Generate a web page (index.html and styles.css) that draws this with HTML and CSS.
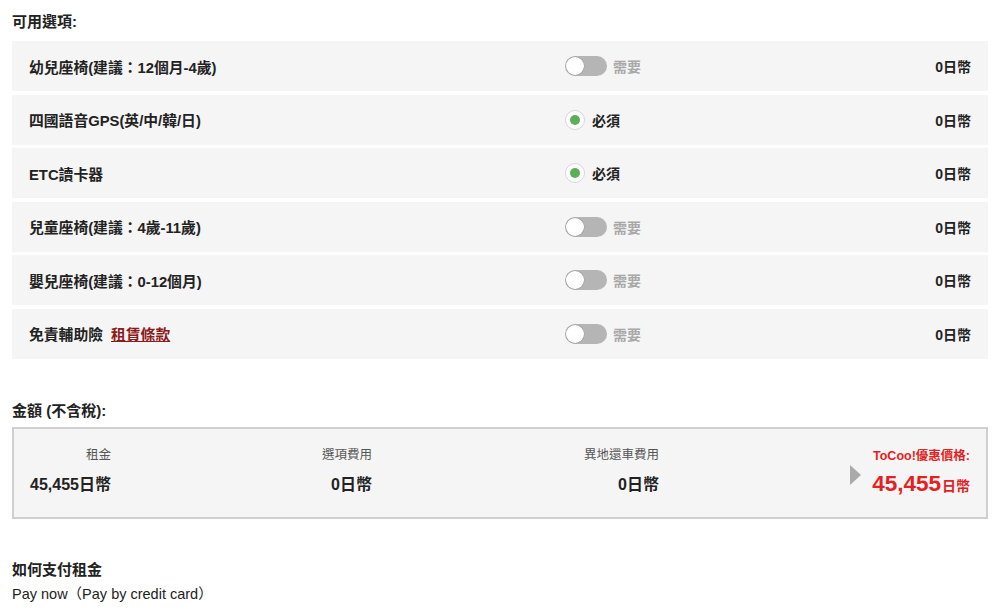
FILE: index.html
```html
<!DOCTYPE html>
<html lang="zh-Hant">
<head>
<meta charset="utf-8">
<title>可用選項</title>
<link rel="stylesheet" href="styles.css">
</head>
<body>
<div class="page">
  <h2 class="section-title">可用選項:</h2>
  <div class="options">
    <div class="opt-row">
      <div class="opt-name">幼兒座椅(建議：12個月-4歲)</div>
      <div class="opt-ctrl"><span class="toggle"><span class="knob"></span></span><span class="ctrl-label off">需要</span></div>
      <div class="opt-price">0日幣</div>
    </div>
    <div class="opt-row">
      <div class="opt-name">四國語音GPS(英/中/韓/日)</div>
      <div class="opt-ctrl"><span class="radio"><span class="dot"></span></span><span class="ctrl-label on">必須</span></div>
      <div class="opt-price">0日幣</div>
    </div>
    <div class="opt-row">
      <div class="opt-name">ETC讀卡器</div>
      <div class="opt-ctrl"><span class="radio"><span class="dot"></span></span><span class="ctrl-label on">必須</span></div>
      <div class="opt-price">0日幣</div>
    </div>
    <div class="opt-row">
      <div class="opt-name">兒童座椅(建議：4歲-11歲)</div>
      <div class="opt-ctrl"><span class="toggle"><span class="knob"></span></span><span class="ctrl-label off">需要</span></div>
      <div class="opt-price">0日幣</div>
    </div>
    <div class="opt-row">
      <div class="opt-name">嬰兒座椅(建議：0-12個月)</div>
      <div class="opt-ctrl"><span class="toggle"><span class="knob"></span></span><span class="ctrl-label off">需要</span></div>
      <div class="opt-price">0日幣</div>
    </div>
    <div class="opt-row">
      <div class="opt-name">免責輔助險<a class="terms" href="#">租賃條款</a></div>
      <div class="opt-ctrl"><span class="toggle"><span class="knob"></span></span><span class="ctrl-label off">需要</span></div>
      <div class="opt-price">0日幣</div>
    </div>
  </div>

  <h2 class="section-title amount-title">金額 (不含稅):</h2>
  <div class="summary">
    <div class="sum-col">
      <div class="sum-label">租金</div>
      <div class="sum-value">45,455日幣</div>
    </div>
    <div class="sum-col">
      <div class="sum-label">選項費用</div>
      <div class="sum-value">0日幣</div>
    </div>
    <div class="sum-col">
      <div class="sum-label">異地還車費用</div>
      <div class="sum-value">0日幣</div>
    </div>
    <div class="sum-col total">
      <span class="arrow"></span>
      <div class="total-text">
        <div class="total-label">ToCoo!優惠價格:</div>
        <div class="total-value"><span class="num">45,455</span><span class="unit">日幣</span></div>
      </div>
    </div>
  </div>

  <h2 class="section-title pay-title">如何支付租金</h2>
  <p class="pay-text">Pay now（Pay by credit card）</p>
</div>
</body>
</html>
```

FILE: styles.css
```css
* { box-sizing: border-box; }
html, body { margin: 0; padding: 0; background: #fff; }
body {
  font-family: "Liberation Sans", Arial, "Noto Sans CJK TC", sans-serif;
  color: #222;
  font-size: 14px;
}
.page { padding: 12px 12px 0 12px; }

.section-title {
  margin: 0;
  font-size: 15px;
  line-height: 20px;
  font-weight: bold;
  color: #222;
}

.options {
  margin-top: 9px;
  display: flex;
  flex-direction: column;
  gap: 3.6px;
}
.opt-row {
  height: 50px;
  background: #f5f5f5;
  display: grid;
  grid-template-columns: 536px 1fr auto;
  align-items: center;
  padding: 0 17px;
}
.opt-name {
  font-weight: bold;
  font-size: 14.8px;
  color: #222;
}
.terms {
  margin-left: 8px;
  color: #8e1b1b;
  text-decoration: underline;
}
.opt-ctrl {
  display: flex;
  align-items: center;
}
.toggle {
  width: 42px;
  height: 20px;
  border-radius: 10px;
  background: #b5b5b5;
  display: flex;
  align-items: center;
  padding: 1px;
}
.knob {
  width: 18px;
  height: 18px;
  border-radius: 50%;
  background: #fff;
  box-shadow: 0 0 0 0.5px #999;
}
.radio {
  width: 20px;
  height: 20px;
  border-radius: 50%;
  background: #fff;
  border: 1px solid #d6d6d6;
  display: flex;
  align-items: center;
  justify-content: center;
}
.dot {
  width: 10px;
  height: 10px;
  border-radius: 50%;
  background: #5cae5a;
}
.ctrl-label {
  font-weight: bold;
  font-size: 14px;
}
.ctrl-label.off { color: #a8a8a8; margin-left: 6px; }
.ctrl-label.on { color: #222; margin-left: 7px; }
.opt-price {
  font-weight: bold;
  font-size: 14px;
  text-align: right;
}

.amount-title { margin-top: 42px; }
.summary {
  margin-top: 6px;
  height: 92px;
  border: 2px solid #cfcfcf;
  background: #f5f5f5;
  display: grid;
  grid-template-columns: 97px 261px 287px 311px;
  padding: 18px 16px 0 0;
}
.sum-col {
  text-align: right;
}
.sum-label {
  font-size: 12.5px;
  line-height: 16px;
  color: #555;
}
.sum-value {
  margin-top: 10px;
  font-size: 16px;
  line-height: 24px;
  font-weight: bold;
  color: #222;
  white-space: nowrap;
}
.total {
  display: flex;
  justify-content: flex-end;
  align-items: center;
  gap: 11px;
  padding-bottom: 16px;
}
.arrow {
  width: 0;
  height: 0;
  border-top: 10px solid transparent;
  border-bottom: 10px solid transparent;
  border-left: 11px solid #aaa;
  margin-top: 2px;
}
.total-text { text-align: right; }
.total-label {
  font-size: 12.5px;
  line-height: 16px;
  font-weight: bold;
  color: #e22222;
}
.total-value {
  margin-top: 6px;
  line-height: 28px;
  color: #e22222;
  font-weight: bold;
  white-space: nowrap;
}
.total-value .num { font-size: 22.5px; }
.total-value .unit { font-size: 14px; margin-left: 1px; }

.pay-title { margin-top: 41px; }
.pay-text {
  margin: 4px 0 0 0;
  font-size: 14.5px;
  line-height: 20px;
  color: #222;
}
```
